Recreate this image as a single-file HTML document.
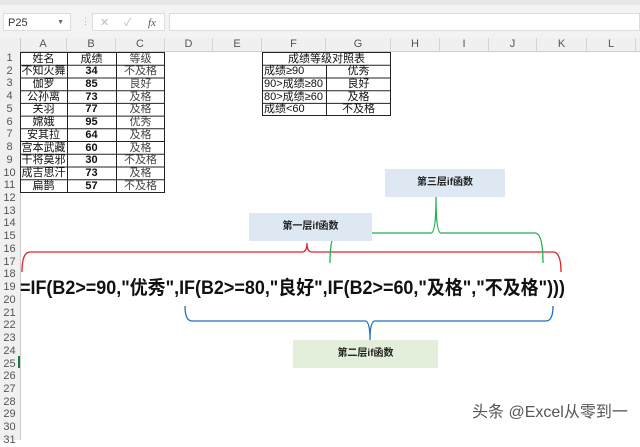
<!DOCTYPE html>
<html><head><meta charset="utf-8"><style>
body{margin:0;width:640px;height:440px;overflow:hidden;background:#fff;font-family:"Liberation Sans","Noto Sans CJK SC",sans-serif;position:relative}
.a{position:absolute}
.c{position:absolute;font-size:11px;color:#111;text-align:center;line-height:13px;margin-top:0.5px;white-space:nowrap}
.rh{position:absolute;left:0;width:19px;text-align:center;font-size:11px;color:#555;line-height:13px}
.ch{position:absolute;top:38px;height:13px;font-size:11px;color:#555;text-align:center;line-height:13px;border-right:1px solid #d4d4d4}
</style></head><body>
<div class="a" style="left:0;top:0;width:640px;height:38px;background:#f3f3f3"></div>
<div class="a" style="left:0;top:0;width:640px;height:5px;background:#e6e6e6"></div>
<div class="a" style="left:3px;top:13px;width:68px;height:18px;background:#fff;border:1px solid #ddd;font-size:11px;color:#333;line-height:18px;padding-left:4px;box-sizing:border-box">P25<span style="position:absolute;right:6px;font-size:7px;color:#666">▼</span></div>
<div class="a" style="left:81px;top:16px;font-size:9px;color:#aaa">⋮</div>
<div class="a" style="left:92px;top:13px;width:73px;height:18px;background:#fff;border:1px solid #ddd;font-size:11px;color:#bbb;line-height:18px;box-sizing:border-box"><span style="position:absolute;left:7px">✕</span><span style="position:absolute;left:31px">✓</span><span style="position:absolute;left:55px;color:#555;font-style:italic;font-family:'Liberation Serif',serif">fx</span></div>
<div class="a" style="left:169px;top:13px;width:471px;height:18px;background:#fff;border:1px solid #ddd;box-sizing:border-box"></div>
<div class="a" style="left:0;top:38px;width:640px;height:13px;background:#f0f0f0;border-bottom:1px solid #ccc"></div>
<div class="a" style="left:0;top:38px;width:20px;height:402px;background:#f0f0f0;border-right:1px solid #ccc"></div>
<div class="ch" style="left:20px;width:46px">A</div>
<div class="ch" style="left:67px;width:48px">B</div>
<div class="ch" style="left:116px;width:48px">C</div>
<div class="ch" style="left:165px;width:47px">D</div>
<div class="ch" style="left:213px;width:48px">E</div>
<div class="ch" style="left:262px;width:63px">F</div>
<div class="ch" style="left:326px;width:64px">G</div>
<div class="ch" style="left:391px;width:48px">H</div>
<div class="ch" style="left:440px;width:48px">I</div>
<div class="ch" style="left:489px;width:47px">J</div>
<div class="ch" style="left:537px;width:49px">K</div>
<div class="ch" style="left:587px;width:48px">L</div>
<div id="rows"></div>
<div class="a" style="left:18px;top:356px;width:2px;height:12px;background:#217346"></div>
<svg class="a" style="left:0;top:0" width="640" height="440">
<g stroke="#222" stroke-width="1" fill="none">
<rect x="20.5" y="52.5" width="144" height="140"/>
<line x1="67.5" y1="52" x2="67.5" y2="193"/><line x1="116.5" y1="52" x2="116.5" y2="193"/>
<path d="M20 65.2H165M20 78H165M20 90.7H165M20 103.4H165M20 116.1H165M20 128.8H165M20 141.5H165M20 154.2H165M20 167H165M20 179.7H165"/>
<rect x="262.5" y="52.5" width="128" height="63"/>
<line x1="326.5" y1="65" x2="326.5" y2="116"/>
<path d="M262 65.2H391M262 78H391M262 90.7H391M262 103.4H391"/>
</g>
<g fill="none" stroke-width="1.3">
<path stroke="#e02020" d="M22 272 Q22 252 30 252 H302 Q307 252 307 243 Q307 252 312 252 H553 Q561 252 561 272"/>
<path stroke="#1fb050" d="M330 263 Q330 233 338 233 H431 Q436 233 436 197 Q436 233 441 233 H535 Q543 233 543 263"/>
<path stroke="#1f6fc0" d="M185 306 Q185 321 192 321 H365 Q370 321 370 340 Q370 321 375 321 H546 Q553 321 553 306"/>
</g>
</svg>
<div id="cells"></div>
<div class="a" style="left:385px;top:169px;width:120px;height:28px;background:#dde8f3;font-size:10px;font-weight:bold;text-align:center;line-height:28px;color:#222">第三层if函数</div>
<div class="a" style="left:249px;top:213px;width:123px;height:28px;background:#dde8f3;font-size:10px;font-weight:bold;text-align:center;line-height:28px;color:#222">第一层if函数</div>
<div class="a" style="left:293px;top:340px;width:145px;height:28px;background:#e3eedb;font-size:10px;font-weight:bold;text-align:center;line-height:28px;color:#222">第二层if函数</div>
<svg class="a" style="left:0;top:0" width="640" height="440"><text x="20" y="294" font-size="19" font-weight="bold" fill="#111" textLength="545" lengthAdjust="spacingAndGlyphs" font-family="Liberation Sans,Noto Sans CJK SC,sans-serif">=IF(B2&gt;=90,"优秀",IF(B2&gt;=80,"良好",IF(B2&gt;=60,"及格","不及格")))</text>
<text x="472" y="417" font-size="16" fill="#555" stroke="#fff" stroke-width="3" paint-order="stroke" font-family="Liberation Sans,Noto Sans CJK SC,sans-serif">头条 @Excel从零到一</text></svg>
<script>
var r='';for(var i=1;i<=31;i++){r+='<div class="rh" style="top:'+(52+(i-1)*12.73)+'px">'+i+'</div>';}
document.getElementById('rows').innerHTML=r;
var d=[["姓名","成绩","等级"],["不知火舞","34","不及格"],["伽罗","85","良好"],["公孙离","73","及格"],["关羽","77","及格"],["嫦娥","95","优秀"],["安其拉","64","及格"],["宫本武藏","60","及格"],["干将莫邪","30","不及格"],["成吉思汗","73","及格"],["扁鹊","57","不及格"]];
var c='';d.forEach(function(row,i){var y=52+i*12.73;
c+='<div class="c" style="left:20px;width:47px;top:'+y+'px">'+row[0]+'</div>';
c+='<div class="c" style="left:67px;width:49px;top:'+y+'px;font-weight:'+(i?'bold':'normal')+'">'+row[1]+'</div>';
c+='<div class="c" style="left:116px;width:49px;top:'+y+'px;color:#444">'+row[2]+'</div>';});
c+='<div class="c" style="left:262px;width:129px;top:52px">成绩等级对照表</div>';
var f=[["成绩≥90","优秀"],["90>成绩≥80","良好"],["80>成绩≥60","及格"],["成绩<60","不及格"]];
f.forEach(function(row,i){var y=52+(i+1)*12.73;c+='<div class="c" style="left:264px;top:'+y+'px;text-align:left">'+row[0].replace('<','&lt;').replace('>','&gt;')+'</div><div class="c" style="left:326px;width:65px;top:'+y+'px">'+row[1]+'</div>';});
document.getElementById('cells').innerHTML=c;
</script>
</body></html>
